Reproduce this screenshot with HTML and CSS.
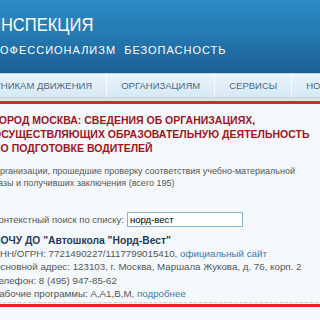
FILE: index.html
```
<!DOCTYPE html>
<html lang="ru">
<head>
    <meta charset="UTF-8">
    <title>Инспекция</title>
    <link rel="stylesheet" href="styles.css">
</head>
<body>
    <div class="site">
        <!-- Header -->
        <div class="header">
            <div class="logo-title">ИНСПЕКЦИЯ</div>
            <div class="logo-sub">ПРОФЕССИОНАЛИЗМ&nbsp; БЕЗОПАСНОСТЬ</div>
        </div>

        <!-- Menu -->
        <div class="menu">
            <a class="menu-item first">УЧАСТНИКАМ ДВИЖЕНИЯ</a>
            <a class="menu-item">ОРГАНИЗАЦИЯМ</a>
            <a class="menu-item">СЕРВИСЫ</a>
            <a class="menu-item">НОВОСТИ</a>
        </div>
        <div class="menu-shadow"></div>
        <div class="red-line"></div>

        <!-- Content -->
        <div class="content">
            <h1 class="page-title">ГОРОД МОСКВА: СВЕДЕНИЯ ОБ ОРГАНИЗАЦИЯХ,<br>ОСУЩЕСТВЛЯЮЩИХ ОБРАЗОВАТЕЛЬНУЮ ДЕЯТЕЛЬНОСТЬ<br>ПО ПОДГОТОВКЕ ВОДИТЕЛЕЙ</h1>
            <p class="intro">Организации, прошедшие проверку соответствия учебно-материальной<br>базы и получивших заключения (всего 195)</p>

            <div class="search">
                <span class="search-label">Контекстный поиск по списку:</span>
                <input type="text" class="search-input" value="норд-вест">
            </div>

            <div class="org">
                <div class="org-name">НОЧУ ДО "Автошкола "Норд-Вест"</div>
                <div class="org-line">ИНН/ОГРН: 7721490227/1117799015410, <a class="link">официальный сайт</a></div>
                <div class="org-line">Основной адрес: 123103, г. Москва, Маршала Жукова, д. 76, корп. 2</div>
                <div class="org-line">Телефон: 8 (495) 947-85-62</div>
                <div class="org-line">Рабочие программы: A,A1,B,M, <a class="link">подробнее</a></div>
            </div>
            <div class="org-end"></div>
        </div>
    </div>
</body>
</html>
```
FILE: styles.css
```
* {
    margin: 0;
    padding: 0;
    box-sizing: border-box;
}

body {
    background: #f6f9fc;
    font-family: 'Liberation Sans', Arial, sans-serif;
    overflow: hidden;
}

.site {
    width: 340px;
    margin-left: -7px;
}

/* Header */
.header {
    height: 73px;
    background: linear-gradient(to bottom, #2e8cc6 0%, #2478b0 50%, #1a5f94 100%);
    padding-top: 14px;
    color: #fff;
    overflow: hidden;
}

.logo-title {
    display: inline-block;
    font-size: 19px;
    line-height: 22px;
    margin-left: -4px;
    white-space: nowrap;
    transform: scaleX(0.87);
    transform-origin: left center;
}

.logo-sub {
    font-size: 11px;
    line-height: 13px;
    margin-top: 8px;
    margin-left: -10px;
    letter-spacing: 1px;
    white-space: nowrap;
}

/* Menu */
.menu {
    display: flex;
    height: 24px;
    background: linear-gradient(to bottom, #eaf4fb, #d6e9f6);
    border-top: 1px solid #b9d6ec;
    overflow: hidden;
}

.menu-item {
    display: flex;
    align-items: center;
    padding: 0 14px;
    font-size: 9.5px;
    color: #4c6986;
    border-left: 1px solid #f7fbfe;
    white-space: nowrap;
}

.menu-item.first {
    margin-left: -37px;
    border-left: none;
}

.menu-shadow {
    height: 4px;
    background: linear-gradient(to bottom, #c9d3db, #e6ebef);
}

.red-line {
    height: 3px;
    background: #e3222a;
}

/* Content */
.content {
    padding-top: 9px;
}

.page-title {
    font-size: 10.5px;
    line-height: 14px;
    font-weight: bold;
    color: #a0141c;
}

.intro {
    font-size: 9px;
    line-height: 12px;
    color: #555;
    margin-top: 10px;
}

.search {
    display: flex;
    align-items: center;
    margin-top: 23px;
    font-size: 9.5px;
    color: #555;
}

.search-input {
    margin-left: 3px;
    width: 116px;
    height: 15px;
    border: 1px solid #8fb2d4;
    font-family: 'Liberation Sans', Arial, sans-serif;
    font-size: 9.5px;
    padding: 0 2px;
    color: #000;
    background: #fff;
}

.org {
    margin-top: 7px;
}

.org-name {
    font-size: 10.3px;
    font-weight: bold;
    color: #1f3c5c;
    line-height: 13px;
}

.org-line {
    font-size: 9.75px;
    line-height: 13.4px;
    color: #555;
}

.link {
    color: #3c78b0;
}

.org-end {
    margin-top: 1px;
    border-top: 1px dashed #c8ccd0;
    border-bottom: 3px solid #e3222a;
    height: 5px;
}
```
